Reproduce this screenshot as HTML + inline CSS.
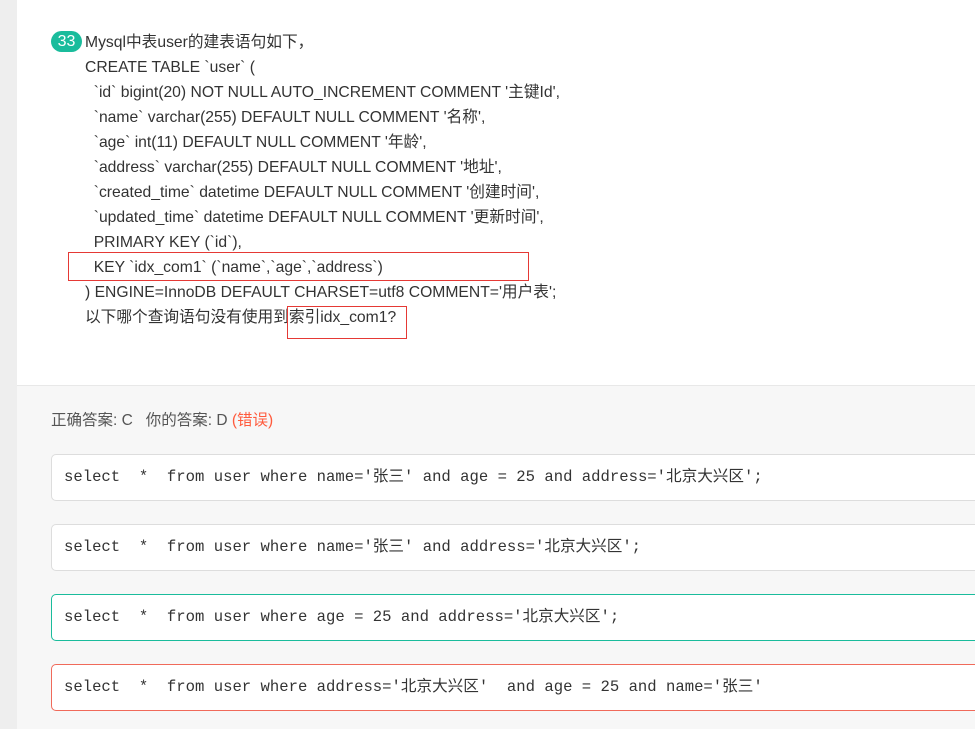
<!DOCTYPE html>
<html><head><meta charset="utf-8"><style>
body{margin:0;width:975px;height:729px;overflow:hidden;background:#eeeeee;font-family:"Liberation Sans","Noto Sans CJK SC",sans-serif;}
.panel{position:absolute;left:17px;top:0;width:958px;height:729px;background:#f7f7f7;}
.top{position:absolute;left:17px;top:0;width:958px;height:385px;background:#fff;border-bottom:1px solid #e8e8e8;}
.q{position:absolute;left:85px;top:30px;font-size:15.7px;line-height:25px;color:#333;white-space:pre;}
.num{position:absolute;left:51px;top:31px;width:31px;height:21px;border-radius:11px;background:#1abc9c;color:#fff;font-size:16px;line-height:21px;text-align:center;}
.rb{position:absolute;border:1px solid #e53935;}
.ans{position:absolute;left:51px;top:408px;font-size:15.5px;color:#555;}
.opt{position:absolute;left:51px;width:940px;background:#fff;border:1px solid #ddd;border-radius:5px;font-family:"Liberation Mono","Noto Sans CJK SC",monospace;font-size:15.6px;line-height:45px;color:#333;padding-left:12px;white-space:pre;box-sizing:border-box;height:47px;}
</style></head><body>
<div class="panel"></div>
<div class="top"></div>
<div class="num">33</div>
<div class="q">Mysql中表user的建表语句如下，
CREATE TABLE `user` (
  `id` bigint(20) NOT NULL AUTO_INCREMENT COMMENT '主键Id',
  `name` varchar(255) DEFAULT NULL COMMENT '名称',
  `age` int(11) DEFAULT NULL COMMENT '年龄',
  `address` varchar(255) DEFAULT NULL COMMENT '地址',
  `created_time` datetime DEFAULT NULL COMMENT '创建时间',
  `updated_time` datetime DEFAULT NULL COMMENT '更新时间',
  PRIMARY KEY (`id`),
  KEY `idx_com1` (`name`,`age`,`address`)
) ENGINE=InnoDB DEFAULT CHARSET=utf8 COMMENT='用户表';
以下哪个查询语句没有使用到索引idx_com1?</div>
<div class="rb" style="left:68px;top:252px;width:459px;height:27px"></div>
<div class="rb" style="left:287px;top:306px;width:118px;height:31px"></div>
<div class="ans">正确答案: C &nbsp; 你的答案: D <span style="color:#ff5a3c">(错误)</span></div>
<div class="opt" style="top:454px">select  *  from user where name='张三' and age = 25 and address='北京大兴区';</div>
<div class="opt" style="top:524px">select  *  from user where name='张三' and address='北京大兴区';</div>
<div class="opt" style="top:594px;border-color:#1abc9c">select  *  from user where age = 25 and address='北京大兴区';</div>
<div class="opt" style="top:664px;border-color:#f06a5a">select  *  from user where address='北京大兴区'  and age = 25 and name='张三'</div>
</body></html>
